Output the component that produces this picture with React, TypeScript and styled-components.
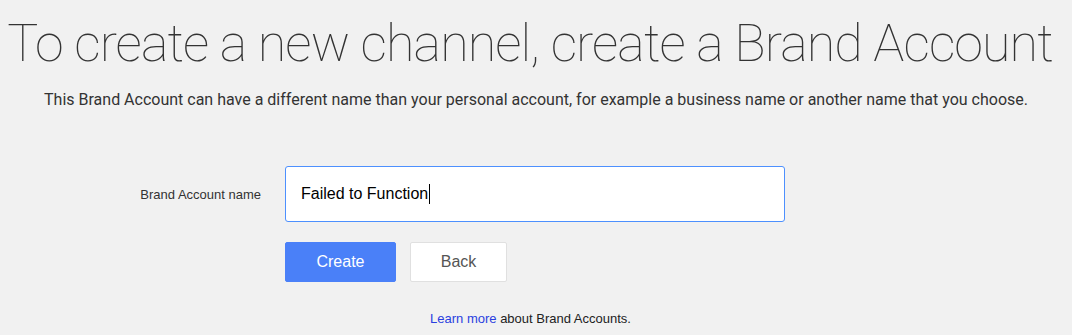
import React from "react";
import styled, { createGlobalStyle } from "styled-components";

const Global = createGlobalStyle`
  html, body { margin: 0; padding: 0; background: #f1f1f1; }
  body { width: 1072px; height: 335px; overflow: hidden; }
`;

const Page = styled.main`
  display: flex;
  flex-direction: column;
  align-items: center;
  padding-top: 12px;
`;

const Title = styled.h1`
  margin: 0 0 0 -12px;
  font-family: Roboto, "Noto Sans", sans-serif;
  font-weight: 100;
  font-size: 52px;
  letter-spacing: -0.92px;
  line-height: 64px;
  color: #333;
  white-space: nowrap;
`;

const Subtitle = styled.p`
  margin: 14px 0 0;
  font-family: Roboto, "Noto Sans", sans-serif;
  font-size: 16px;
  line-height: 20px;
  color: #333;
  white-space: nowrap;
`;

const Form = styled.div`
  display: grid;
  grid-template-columns: 125px 500px;
  column-gap: 24px;
  row-gap: 20px;
  margin-top: 56px;
  margin-left: -151px;
  align-items: center;
`;

const Label = styled.label`
  font-family: "Liberation Sans", Arial, sans-serif;
  font-size: 13px;
  color: #333;
  text-align: right;
`;

const Input = styled.div`
  box-sizing: border-box;
  height: 56px;
  border: 1px solid #4d90fe;
  border-radius: 3px;
  background: #fff;
  display: flex;
  align-items: center;
  padding-left: 15px;
  font-family: "Liberation Sans", Arial, sans-serif;
  font-size: 16px;
  color: #000;
`;

const Caret = styled.span`
  display: inline-block;
  width: 1px;
  height: 20px;
  background: #000;
  margin-left: 1px;
`;

const Buttons = styled.div`
  grid-column: 2;
  display: flex;
  gap: 14px;
`;

const Button = styled.button<{ $primary?: boolean }>`
  box-sizing: border-box;
  height: 40px;
  width: ${(p) => (p.$primary ? "111px" : "97px")};
  border-radius: 2px;
  border: 1px solid ${(p) => (p.$primary ? "#4a80f8" : "#e0e0e0")};
  background: ${(p) => (p.$primary ? "#4a80f8" : "#fff")};
  color: ${(p) => (p.$primary ? "#fff" : "#555")};
  font-family: "Liberation Sans", Arial, sans-serif;
  font-size: 16px;
  padding: 0;
`;

const Footer = styled.p`
  margin: 29px 0 0 -11px;
  font-family: "Liberation Sans", Arial, sans-serif;
  font-size: 13px;
  color: #222;
`;

const Link = styled.a`
  color: #2a3fe0;
  text-decoration: none;
`;

export default function App() {
  return (
    <>
      <Global />
      <Page>
        <Title>To create a new channel, create a Brand Account</Title>
        <Subtitle>
          This Brand Account can have a different name than your personal account, for example a business name or another name that you choose.
        </Subtitle>
        <Form>
          <Label>Brand Account name</Label>
          <Input>
            Failed to Function
            <Caret />
          </Input>
          <Buttons>
            <Button $primary>Create</Button>
            <Button>Back</Button>
          </Buttons>
        </Form>
        <Footer>
          <Link href="#">Learn more</Link> about Brand Accounts.
        </Footer>
      </Page>
    </>
  );
}
